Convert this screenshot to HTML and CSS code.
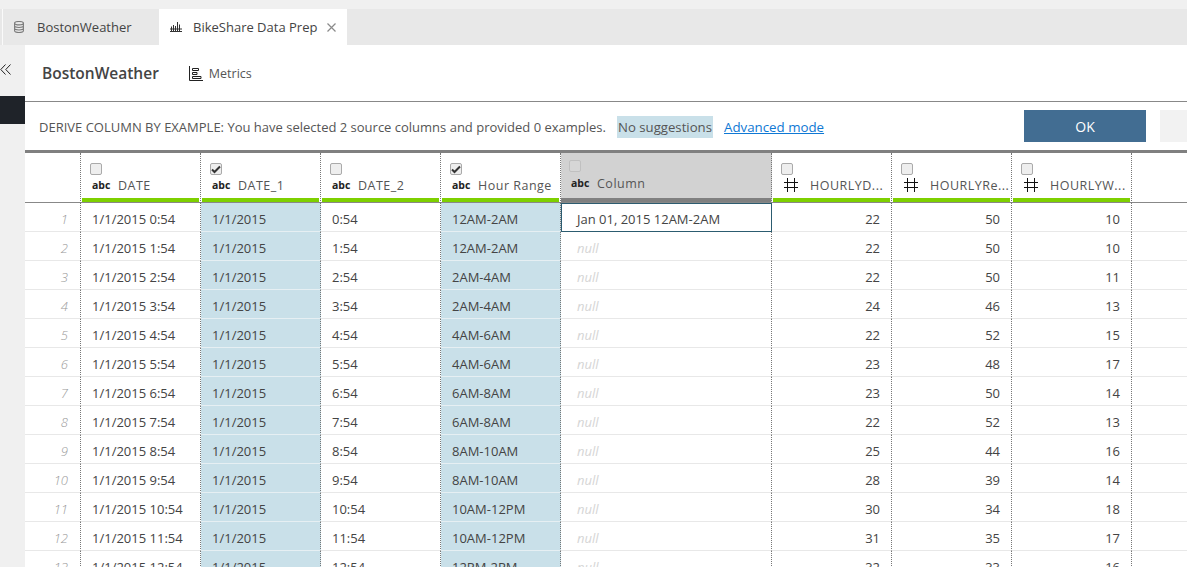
FILE: index.html
```html
<!DOCTYPE html>
<html>
<head>
    <title>BikeShare Data Prep</title>
    <link rel="stylesheet" href="styles.css">
</head>
<body>
    <div class="tabbar">
        <div class="tab">
            <svg class="tab-icon" width="10" height="12" viewBox="0 0 10 12" fill="none" stroke="#7a7a7a" stroke-width="1.1"><ellipse cx="5" cy="2.200" rx="4.400" ry="1.700"/><path d="M.6 2.200v7.600c0 .9 2 1.700 4.400 1.700s4.400-.8 4.400-1.700V2.200M.6 4.800c0 .9 2 1.700 4.400 1.700s4.400-.8 4.400-1.700M.6 7.300c0 .9 2 1.700 4.400 1.700s4.400-.8 4.400-1.700"/></svg>
            <span>BostonWeather</span>
        </div>
        <div class="tab active">
            <svg class="tab-icon" width="12" height="10" viewBox="0 0 12 10" fill="none" stroke="#333" stroke-width="1"><path d="M1.500 4.500V9M3.500 3V9M5.500 4V9M7.500 0V9M9.500 2.500V9M0 9.500h12M0 7h12"/></svg>
            <span>BikeShare Data Prep</span>
            <svg class="tab-close" width="9" height="9" viewBox="0 0 9 9" stroke="#8a8a8a" stroke-width="1.200"><path d="M.5.5l8 8M8.500.5l-8 8"/></svg>
        </div>
    </div>

    <div class="app">
        <div class="sidebar">
            <svg class="collapse" width="11" height="11" viewBox="0 0 11 11" fill="none" stroke="#222" stroke-width="1"><path d="M5.500.5L.8 5.500l4.700 5M10.500.5L5.800 5.500l4.700 5"/></svg>
            <div class="side-item"></div>
        </div>

        <div class="main">
            <div class="title-bar">
                <h1>BostonWeather</h1>
                <svg class="metrics-icon" width="14" height="15" viewBox="0 0 14 15" fill="none" stroke="#222" stroke-width="1"><path d="M.5 0v14.500H14M3.500 2.500h6v2h-6zM3.500 6.500h4.500v2h-4.500zM3.500 10.500h8.500v2h-8.500z"/></svg>
                <span class="metrics">Metrics</span>
            </div>

            <div class="derive-bar">
                <span class="derive-text">DERIVE COLUMN BY EXAMPLE: You have selected 2 source columns and provided 0 examples.</span>
                <span class="suggestions">No suggestions</span>
                <a class="advanced" href="#">Advanced mode</a>
                <button class="ok-btn">OK</button>
                <button class="cancel-btn"></button>
            </div>

            <table class="grid">
                <thead>
                    <tr>
                        <th class="num"></th>
                        <th><span class="check"></span><div class="col-name"><span class="abc">abc</span><span>DATE</span></div></th>
                        <th><span class="check checked"><svg width="10" height="9" viewBox="0 0 10 9" fill="none" stroke="#333" stroke-width="2"><path d="M1 4.500l2.500 2.500L9 1.500"/></svg></span><div class="col-name"><span class="abc">abc</span><span>DATE_1</span></div></th>
                        <th><span class="check"></span><div class="col-name"><span class="abc">abc</span><span>DATE_2</span></div></th>
                        <th><span class="check checked"><svg width="10" height="9" viewBox="0 0 10 9" fill="none" stroke="#333" stroke-width="2"><path d="M1 4.500l2.500 2.500L9 1.500"/></svg></span><div class="col-name"><span class="abc">abc</span><span>Hour Range</span></div></th>
                        <th class="new-col"><span class="check"></span><div class="col-name"><span class="abc">abc</span><span>Column</span></div></th>
                        <th class="measure"><span class="check"></span><div class="col-name"><svg class="hash" width="14" height="14" viewBox="0 0 14 14" stroke="#111"><path d="M0 4.500h14M0 9.500h14M3.500 0v14M10.500 0v14"/></svg><span>HOURLYD...</span></div></th>
                        <th class="measure"><span class="check"></span><div class="col-name"><svg class="hash" width="14" height="14" viewBox="0 0 14 14" stroke="#111"><path d="M0 4.500h14M0 9.500h14M3.500 0v14M10.500 0v14"/></svg><span>HOURLYRe...</span></div></th>
                        <th class="measure"><span class="check"></span><div class="col-name"><svg class="hash" width="14" height="14" viewBox="0 0 14 14" stroke="#111"><path d="M0 4.500h14M0 9.500h14M3.500 0v14M10.500 0v14"/></svg><span>HOURLYW...</span></div></th>
                        <th class="rest"></th>
                    </tr>
                </thead>
                <tbody>
                    <tr><td class="num">1</td><td>1/1/2015 0:54</td><td class="sel">1/1/2015</td><td>0:54</td><td class="sel">12AM-2AM</td><td class="example">Jan 01, 2015 12AM-2AM</td><td class="val">22</td><td class="val">50</td><td class="val">10</td><td class="rest"></td></tr>
                    <tr><td class="num">2</td><td>1/1/2015 1:54</td><td class="sel">1/1/2015</td><td>1:54</td><td class="sel">12AM-2AM</td><td class="null">null</td><td class="val">22</td><td class="val">50</td><td class="val">10</td><td class="rest"></td></tr>
                    <tr><td class="num">3</td><td>1/1/2015 2:54</td><td class="sel">1/1/2015</td><td>2:54</td><td class="sel">2AM-4AM</td><td class="null">null</td><td class="val">22</td><td class="val">50</td><td class="val">11</td><td class="rest"></td></tr>
                    <tr><td class="num">4</td><td>1/1/2015 3:54</td><td class="sel">1/1/2015</td><td>3:54</td><td class="sel">2AM-4AM</td><td class="null">null</td><td class="val">24</td><td class="val">46</td><td class="val">13</td><td class="rest"></td></tr>
                    <tr><td class="num">5</td><td>1/1/2015 4:54</td><td class="sel">1/1/2015</td><td>4:54</td><td class="sel">4AM-6AM</td><td class="null">null</td><td class="val">22</td><td class="val">52</td><td class="val">15</td><td class="rest"></td></tr>
                    <tr><td class="num">6</td><td>1/1/2015 5:54</td><td class="sel">1/1/2015</td><td>5:54</td><td class="sel">4AM-6AM</td><td class="null">null</td><td class="val">23</td><td class="val">48</td><td class="val">17</td><td class="rest"></td></tr>
                    <tr><td class="num">7</td><td>1/1/2015 6:54</td><td class="sel">1/1/2015</td><td>6:54</td><td class="sel">6AM-8AM</td><td class="null">null</td><td class="val">23</td><td class="val">50</td><td class="val">14</td><td class="rest"></td></tr>
                    <tr><td class="num">8</td><td>1/1/2015 7:54</td><td class="sel">1/1/2015</td><td>7:54</td><td class="sel">6AM-8AM</td><td class="null">null</td><td class="val">22</td><td class="val">52</td><td class="val">13</td><td class="rest"></td></tr>
                    <tr><td class="num">9</td><td>1/1/2015 8:54</td><td class="sel">1/1/2015</td><td>8:54</td><td class="sel">8AM-10AM</td><td class="null">null</td><td class="val">25</td><td class="val">44</td><td class="val">16</td><td class="rest"></td></tr>
                    <tr><td class="num">10</td><td>1/1/2015 9:54</td><td class="sel">1/1/2015</td><td>9:54</td><td class="sel">8AM-10AM</td><td class="null">null</td><td class="val">28</td><td class="val">39</td><td class="val">14</td><td class="rest"></td></tr>
                    <tr><td class="num">11</td><td>1/1/2015 10:54</td><td class="sel">1/1/2015</td><td>10:54</td><td class="sel">10AM-12PM</td><td class="null">null</td><td class="val">30</td><td class="val">34</td><td class="val">18</td><td class="rest"></td></tr>
                    <tr><td class="num">12</td><td>1/1/2015 11:54</td><td class="sel">1/1/2015</td><td>11:54</td><td class="sel">10AM-12PM</td><td class="null">null</td><td class="val">31</td><td class="val">35</td><td class="val">17</td><td class="rest"></td></tr>
                    <tr><td class="num">13</td><td>1/1/2015 12:54</td><td class="sel">1/1/2015</td><td>12:54</td><td class="sel">12PM-2PM</td><td class="null">null</td><td class="val">32</td><td class="val">33</td><td class="val">16</td><td class="rest"></td></tr>
                </tbody>
            </table>
        </div>
    </div>
</body>
</html>
```

FILE: styles.css
```css
html, body {
    height: 567px;
    overflow: hidden;
}

body {
    font-family: "Open Sans", sans-serif;
    font-size: 13px;
    color: #444;
    margin: 0;
    padding-top: 9px;
    background-color: #f0f0f0;
    box-sizing: border-box;
}

.tabbar {
    display: flex;
    height: 36px;
    padding-left: 2px;
    background-color: #e8e8e8;
}

.tab {
    display: flex;
    align-items: center;
    width: 157px;
    padding-left: 11px;
    box-sizing: border-box;
    border-left: 1px solid #fafafa;
    color: #444;
}

.tab-icon {
    margin-right: 13px;
}

.tab.active {
    width: 188px;
    padding-left: 11px;
    border-left: none;
    background-color: #fff;
}

.tab.active .tab-icon {
    margin-right: 11px;
}

.tab-close {
    margin-left: 10px;
}

.app {
    display: flex;
    height: 522px;
}

.sidebar {
    width: 25px;
    flex-shrink: 0;
}

.collapse {
    display: block;
    height: 11px;
    margin-top: 19px;
    margin-bottom: 21px;
    margin-left: 0;
}

.side-item {
    height: 28px;
    background-color: #1f2329;
}

.main {
    flex: 1;
    min-width: 0;
    background-color: #fff;
}

.title-bar {
    display: flex;
    align-items: center;
    height: 57px;
    padding-left: 17px;
    box-sizing: border-box;
    border-bottom: 1px solid #888;
}

.title-bar h1 {
    margin: 0 30px 0 0;
    font-size: 15.500px;
    font-weight: 600;
    color: #444;
}

.metrics-icon {
    margin-right: 6px;
}

.metrics {
    font-size: 12.500px;
    color: #555;
}

.derive-bar {
    display: flex;
    align-items: center;
    height: 51px;
    padding-left: 14px;
    box-sizing: border-box;
    border-bottom: 3px solid #808080;
    color: #555;
}

.derive-text {
    margin-top: 2px;
}

.suggestions {
    margin-top: 2px;
    margin-left: 11px;
    padding: 2px 1px;
    background-color: #c9e0e9;
    font-size: 13.200px;
}

.advanced {
    margin-top: 2px;
    margin-left: 11px;
    color: #0f78d4;
    font-size: 13.300px;
}

.ok-btn {
    width: 122px;
    height: 32px;
    margin-left: auto;
    border: none;
    background-color: #426d92;
    color: #fff;
    font-family: inherit;
    font-size: 14px;
}

.cancel-btn {
    width: 27px;
    height: 32px;
    margin-left: 14px;
    border: none;
    background-color: #f2f2f2;
}

.grid {
    width: 1162px;
    table-layout: fixed;
    border-collapse: separate;
    border-spacing: 0;
}

.grid th {
    width: 120px;
    height: 50px;
    padding: 0 0 0 9px;
    box-sizing: border-box;
    border-right: 1px dotted #777;
    border-bottom: 1px solid #888;
    background: linear-gradient(#7ed000, #7ed000) no-repeat 1px bottom / calc(100% - 2px) 4px;
    font-weight: normal;
    text-align: left;
    vertical-align: top;
}

.grid th.num {
    width: 56px;
    background: none;
}

.grid th.new-col {
    width: 211px;
    padding-left: 8px;
    background: linear-gradient(#808080, #808080) no-repeat 0 bottom / 100% 4px #d2d2d2;
}

.grid th.rest,
.grid td.rest {
    width: auto;
    border-right: none;
    background: none;
}

.check {
    display: flex;
    align-items: center;
    justify-content: center;
    width: 10px;
    height: 10px;
    margin-top: 10px;
    border: 1px solid #aaa;
    border-radius: 2px;
    background-color: #eee;
}

.new-col .check {
    margin-top: 7px;
    background-color: #d6d6d6;
    border-color: #c0c0c0;
}

.col-name {
    display: flex;
    align-items: center;
    height: 16px;
    margin-top: 2px;
    font-size: 12.500px;
    color: #555;
    letter-spacing: .5px;
}

.new-col .col-name {
    margin-top: 3px;
}

.abc {
    width: 26px;
    margin-left: 2px;
    flex-shrink: 0;
    font-size: 10.500px;
    font-weight: 700;
    color: #222;
    letter-spacing: 0;
}

.hash {
    flex-shrink: 0;
    margin-left: 3px;
    margin-right: 12px;
}

.grid td {
    height: 29px;
    padding: 3px 0 0 11px;
    box-sizing: border-box;
    border-right: 1px dotted #777;
    border-bottom: 1px solid #e8e8e8;
    white-space: nowrap;
    color: #444;
}

.grid td.num {
    padding: 3px 12px 0 0;
    text-align: right;
    font-style: italic;
    font-weight: 300;
    color: #999;
}

.grid td.sel {
    background-color: #c9e0e9;
    border-bottom-color: #e6eff3;
}

.grid td.val {
    padding: 3px 11px 0 0;
    text-align: right;
}

.grid td.null {
    padding-left: 16px;
    font-style: italic;
    color: #d5d5d5;
}

.grid td.example {
    padding-left: 16px;
    outline: 1px solid #2c5c70;
    outline-offset: -1px;
}
```
